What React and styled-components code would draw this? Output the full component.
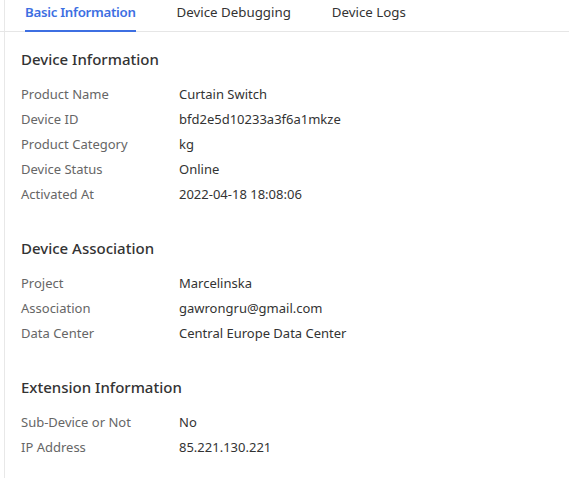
import React from 'react'
import styled, { createGlobalStyle } from 'styled-components'

const GlobalStyle = createGlobalStyle`
  html, body {
    margin: 0;
    padding: 0;
    background: #fff;
  }
  body {
    font-family: 'Noto Sans', 'Open Sans', sans-serif;
    color: #333;
  }
`

const Page = styled.div`
  margin-left: 4px;
  border-left: 1px solid #e8e8e8;
  height: 478px;
  box-sizing: border-box;
`

const TabBar = styled.div`
  display: flex;
  gap: 41px;
  margin-left: -5px;
  padding-left: 25px;
  height: 31px;
  border-bottom: 1px solid #e6e6e6;
`

const Tab = styled.div`
  display: flex;
  align-items: flex-start;
  padding-top: 2px;
  box-sizing: border-box;
  font-size: 13.3px;
  line-height: 20px;
  color: ${p => (p.$active ? '#3d6fe2' : '#333')};
  font-weight: ${p => (p.$active ? 600 : 400)};
  letter-spacing: ${p => (p.$active ? '-0.3px' : '0')};
  border-bottom: 2px solid ${p => (p.$active ? '#3d6fe2' : 'transparent')};
  margin-bottom: -1px;
`

const Content = styled.div`
  padding: 16px 0 0 16px;
`

const Section = styled.section`
  margin-bottom: 30px;
`

const Heading = styled.h3`
  margin: 0 0 12px;
  font-size: 15px;
  line-height: 22px;
  font-weight: 500;
  color: #333;
`

const Row = styled.div`
  display: grid;
  grid-template-columns: 158px 1fr;
  font-size: 13px;
  line-height: 25px;
`

const Label = styled.span`
  color: #666;
`

const Value = styled.span`
  color: #333;
`

const sections = [
  {
    title: 'Device Information',
    rows: [
      ['Product Name', 'Curtain Switch'],
      ['Device ID', 'bfd2e5d10233a3f6a1mkze'],
      ['Product Category', 'kg'],
      ['Device Status', 'Online'],
      ['Activated At', '2022-04-18 18:08:06'],
    ],
  },
  {
    title: 'Device Association',
    rows: [
      ['Project', 'Marcelinska'],
      ['Association', 'gawrongru@gmail.com'],
      ['Data Center', 'Central Europe Data Center'],
    ],
  },
  {
    title: 'Extension Information',
    rows: [
      ['Sub-Device or Not', 'No'],
      ['IP Address', '85.221.130.221'],
    ],
  },
]

const App = () => {
  return (
    <>
      <GlobalStyle />
      <Page>
        <TabBar>
          <Tab $active>Basic Information</Tab>
          <Tab>Device Debugging</Tab>
          <Tab>Device Logs</Tab>
        </TabBar>
        <Content>
          {sections.map(s => (
            <Section key={s.title}>
              <Heading>{s.title}</Heading>
              {s.rows.map(([label, value]) => (
                <Row key={label}>
                  <Label>{label}</Label>
                  <Value>{value}</Value>
                </Row>
              ))}
            </Section>
          ))}
        </Content>
      </Page>
    </>
  )
}

export default App
